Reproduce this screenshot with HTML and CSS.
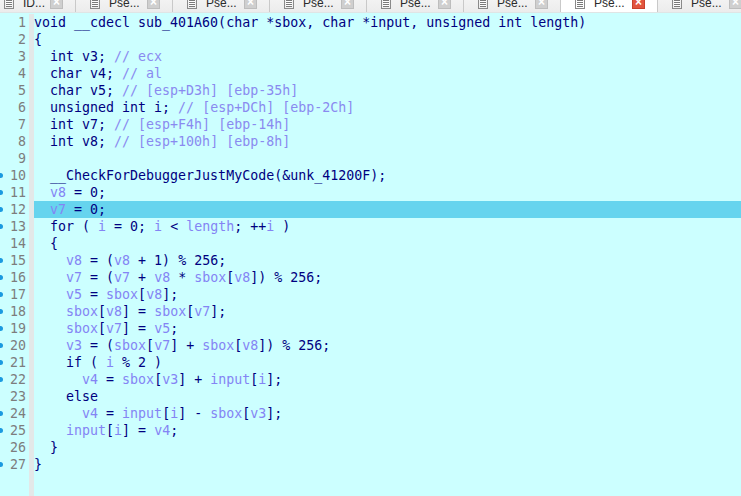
FILE: index.html
```html
<!DOCTYPE html>
<html>
<head>
<meta charset="utf-8">
<link rel="stylesheet" href="styles.css">
</head>
<body>
<div class="tabstrip">
  <div class="tabs">
    <div class="tab tab-first"><span class="ticon"></span><span class="tlabel">ID...</span><span class="tclose">×</span></div>
    <div class="tab"><span class="ticon"></span><span class="tlabel">Pse...</span><span class="tclose">×</span></div>
    <div class="tab"><span class="ticon"></span><span class="tlabel">Pse...</span><span class="tclose">×</span></div>
    <div class="tab"><span class="ticon"></span><span class="tlabel">Pse...</span><span class="tclose">×</span></div>
    <div class="tab"><span class="ticon"></span><span class="tlabel">Pse...</span><span class="tclose">×</span></div>
    <div class="tab"><span class="ticon"></span><span class="tlabel">Pse...</span><span class="tclose">×</span></div>
    <div class="tab active"><span class="ticon"></span><span class="tlabel">Pse...</span><span class="tclose">×</span></div>
    <div class="tab"><span class="ticon"></span><span class="tlabel">Pse...</span><span class="tclose">×</span></div>
  </div>
</div>
<div class="editor">
  <div class="gutter">
    <div class="ln">1</div>
    <div class="ln">2</div>
    <div class="ln">3</div>
    <div class="ln">4</div>
    <div class="ln">5</div>
    <div class="ln">6</div>
    <div class="ln">7</div>
    <div class="ln">8</div>
    <div class="ln">9</div>
    <div class="ln dot">10</div>
    <div class="ln dot">11</div>
    <div class="ln dot">12</div>
    <div class="ln dot">13</div>
    <div class="ln">14</div>
    <div class="ln dot">15</div>
    <div class="ln dot">16</div>
    <div class="ln dot">17</div>
    <div class="ln dot">18</div>
    <div class="ln dot">19</div>
    <div class="ln dot">20</div>
    <div class="ln dot">21</div>
    <div class="ln dot">22</div>
    <div class="ln">23</div>
    <div class="ln dot">24</div>
    <div class="ln dot">25</div>
    <div class="ln">26</div>
    <div class="ln dot">27</div>
  </div>
  <div class="sep"></div>
  <div class="code">
<div class="line">void __cdecl sub_401A60(char *sbox, char *input, unsigned int length)</div>
<div class="line">{</div>
<div class="line">  int v3; <span class="c">// ecx</span></div>
<div class="line">  char v4; <span class="c">// al</span></div>
<div class="line">  char v5; <span class="c">// [esp+D3h] [ebp-35h]</span></div>
<div class="line">  unsigned int i; <span class="c">// [esp+DCh] [ebp-2Ch]</span></div>
<div class="line">  int v7; <span class="c">// [esp+F4h] [ebp-14h]</span></div>
<div class="line">  int v8; <span class="c">// [esp+100h] [ebp-8h]</span></div>
<div class="line"> </div>
<div class="line">  __CheckForDebuggerJustMyCode(&amp;unk_41200F);</div>
<div class="line">  <span class="v">v8</span> = 0;</div>
<div class="line hl">  <span class="v">v7</span> = 0;</div>
<div class="line">  for ( <span class="v">i</span> = 0; <span class="v">i</span> &lt; <span class="v">length</span>; ++<span class="v">i</span> )</div>
<div class="line">  {</div>
<div class="line">    <span class="v">v8</span> = (<span class="v">v8</span> + 1) % 256;</div>
<div class="line">    <span class="v">v7</span> = (<span class="v">v7</span> + <span class="v">v8</span> * <span class="v">sbox</span>[<span class="v">v8</span>]) % 256;</div>
<div class="line">    <span class="v">v5</span> = <span class="v">sbox</span>[<span class="v">v8</span>];</div>
<div class="line">    <span class="v">sbox</span>[<span class="v">v8</span>] = <span class="v">sbox</span>[<span class="v">v7</span>];</div>
<div class="line">    <span class="v">sbox</span>[<span class="v">v7</span>] = <span class="v">v5</span>;</div>
<div class="line">    <span class="v">v3</span> = (<span class="v">sbox</span>[<span class="v">v7</span>] + <span class="v">sbox</span>[<span class="v">v8</span>]) % 256;</div>
<div class="line">    if ( <span class="v">i</span> % 2 )</div>
<div class="line">      <span class="v">v4</span> = <span class="v">sbox</span>[<span class="v">v3</span>] + <span class="v">input</span>[<span class="v">i</span>];</div>
<div class="line">    else</div>
<div class="line">      <span class="v">v4</span> = <span class="v">input</span>[<span class="v">i</span>] - <span class="v">sbox</span>[<span class="v">v3</span>];</div>
<div class="line">    <span class="v">input</span>[<span class="v">i</span>] = <span class="v">v4</span>;</div>
<div class="line">  }</div>
<div class="line">}</div>
  </div>
</div>
</body>
</html>
```

FILE: styles.css
```css
html, body {
  margin: 0;
  padding: 0;
  background: #ccffff;
  overflow: hidden;
}

.tabstrip {
  height: 12px;
  overflow: hidden;
  background: #f0f0f0;
  border-bottom: 1px solid #dfe5e5;
}

.tabs {
  display: flex;
  margin-top: -9px;
  margin-left: -10px;
  height: 21px;
}

.tab {
  flex: none;
  width: 97px;
  box-sizing: border-box;
  height: 21px;
  display: flex;
  align-items: center;
  padding: 0 12px 0 14px;
  background: linear-gradient(#f7f7f7, #ececec);
  border-right: 1px solid #c9c9c9;
  font-family: "Liberation Sans", Arial, sans-serif;
  font-size: 12px;
  color: #2b2b2b;
}

.tab-first {
  width: 86px;
}

.tab.active {
  background: #ffffff;
}

.ticon {
  flex: none;
  width: 10px;
  height: 11px;
  box-sizing: border-box;
  border: 1px solid #8a8a8a;
  background: repeating-linear-gradient(#ffffff 0 1px, #7a7a7a 1px 2px);
  background-clip: content-box;
  padding: 1px 1px;
  margin-top: 4px;
}

.tlabel {
  flex: 1;
  margin-left: 9px;
  margin-top: 2px;
}

.tclose {
  flex: none;
  width: 13px;
  height: 13px;
  box-sizing: border-box;
  background: #cfcfcf;
  border: 1px solid #bdbdbd;
  color: #ffffff;
  font-size: 12px;
  line-height: 11px;
  text-align: center;
  font-weight: bold;
  margin-top: 2px;
}

.tab.active .tclose {
  background: #e2553f;
  border-color: #c8412c;
}

.editor {
  display: flex;
  height: calc(100vh - 13px);
  padding-top: 1px;
  box-sizing: border-box;
  font-family: "DejaVu Sans Mono", "Liberation Mono", monospace;
  font-size: 13.3px;
}

.gutter {
  flex: none;
  width: 29px;
  box-sizing: border-box;
  padding-right: 3px;
  color: #7d7d7d;
}

.ln {
  height: 17px;
  line-height: 17px;
  text-align: right;
  position: relative;
}

.ln.dot::before {
  content: "";
  position: absolute;
  left: -2px;
  top: 6px;
  width: 5px;
  height: 5px;
  border-radius: 50%;
  background: #1b9ae0;
}

.sep {
  flex: none;
  width: 5px;
  background: #e3e8e8;
}

.code {
  flex: 1;
  color: #000080;
}

.line {
  height: 17px;
  line-height: 17px;
  white-space: pre;
}

.line.hl {
  background: #66d4ee;
}

.v {
  color: #8484f4;
}

.c {
  color: #8a8af0;
}
```
